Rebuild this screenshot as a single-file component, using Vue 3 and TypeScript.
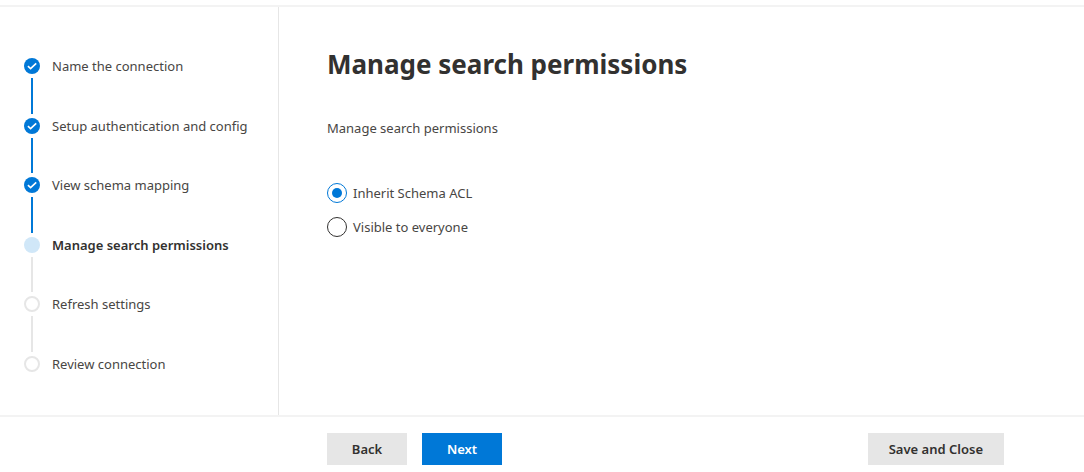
<script setup lang="ts">
import { ref } from 'vue'

type StepState = 'done' | 'current' | 'todo'

interface Step {
  label: string
  state: StepState
}

const steps: Step[] = [
  { label: 'Name the connection', state: 'done' },
  { label: 'Setup authentication and config', state: 'done' },
  { label: 'View schema mapping', state: 'done' },
  { label: 'Manage search permissions', state: 'current' },
  { label: 'Refresh settings', state: 'todo' },
  { label: 'Review connection', state: 'todo' },
]

const options = [
  { value: 'acl', label: 'Inherit Schema ACL' },
  { value: 'everyone', label: 'Visible to everyone' },
]

const visibility = ref('acl')
</script>

<template>
  <div class="wizard">
    <div class="body">
      <nav class="sidebar" aria-label="Setup steps">
        <ol class="steps">
          <li
            v-for="step in steps"
            :key="step.label"
            class="step"
            :class="step.state"
            :aria-current="step.state === 'current' ? 'step' : undefined"
          >
            <div class="track">
              <span class="marker">
                <svg v-if="step.state === 'done'" viewBox="0 0 16 16" aria-hidden="true">
                  <path d="M3.9 8.2 6.6 10.7 12.2 5.3" />
                </svg>
              </span>
              <span class="line"></span>
            </div>
            <span class="label">{{ step.label }}</span>
          </li>
        </ol>
      </nav>
      <main class="content">
        <h1>Manage search permissions</h1>
        <p id="description">Manage search permissions</p>
        <div class="options" role="radiogroup" aria-labelledby="description">
          <label v-for="option in options" :key="option.value" class="option">
            <input v-model="visibility" type="radio" name="visibility" :value="option.value" />
            <span>{{ option.label }}</span>
          </label>
        </div>
      </main>
    </div>
    <footer class="footer">
      <button type="button">Back</button>
      <button type="button" class="primary">Next</button>
      <button type="button" class="save">Save and Close</button>
    </footer>
  </div>
</template>

<style>
body {
  margin: 0;
  background: #fff;
}
</style>

<style scoped>
.wizard {
  box-sizing: border-box;
  display: flex;
  flex-direction: column;
  min-height: 100vh;
  padding-top: 5px;
  color: #484644;
  font-family: "Segoe UI", "Noto Sans", "Open Sans", sans-serif;
  font-size: 13px;
  line-height: 20px;
}

.body {
  display: flex;
  flex: 1;
  border-top: 2px solid #f3f3f3;
}

.sidebar {
  box-sizing: border-box;
  display: flex;
  flex: none;
  width: 279px;
  padding: 51px 16px 43px 24px;
  border-right: 1px solid #e6e6e6;
}

.steps {
  display: flex;
  flex: 1;
  flex-direction: column;
  margin: 0;
  padding: 0;
  list-style: none;
}

.step {
  display: flex;
  flex: 1;
  gap: 12px;
}

.step:last-child {
  flex: none;
}

.track {
  display: flex;
  flex-direction: column;
  align-items: center;
}

.marker {
  box-sizing: border-box;
  width: 16px;
  height: 16px;
  border: 2px solid #e6e6e6;
  border-radius: 50%;
}

.done .marker {
  border: 0;
  background: #0078d7;
}

.current .marker {
  border: 0;
  background: #d0e7f8;
}

.marker svg {
  display: block;
  fill: none;
  stroke: #fff;
  stroke-width: 1.6;
}

.line {
  flex: 1;
  width: 2px;
  min-height: 24px;
  margin: 4px 0;
  background: #e6e6e6;
}

.done .line {
  background: #0078d7;
}

.step:last-child .line {
  display: none;
}

.label {
  height: 16px;
  line-height: 16px;
}

.current .label {
  color: #323130;
  font-weight: 600;
}

.content {
  flex: 1;
  padding: 37px 48px 0;
}

h1 {
  margin: 0;
  color: #323130;
  font-size: 26px;
  font-weight: 700;
  line-height: 40px;
}

p {
  margin: 34px 0 0;
}

.options {
  display: flex;
  flex-direction: column;
  align-items: flex-start;
  gap: 14px;
  margin-top: 45px;
}

.option {
  display: flex;
  gap: 6px;
}

.option input {
  appearance: none;
  display: grid;
  place-content: center;
  box-sizing: border-box;
  width: 20px;
  height: 20px;
  margin: 0;
  border: 1px solid #323130;
  border-radius: 50%;
}

.option input:checked {
  border-color: #0078d7;
}

.option input:checked::before {
  content: "";
  width: 10px;
  height: 10px;
  border-radius: 50%;
  background: #0078d7;
}

.footer {
  display: flex;
  gap: 15px;
  padding: 16px 80px 7px 327px;
  border-top: 2px solid #f3f3f3;
}

button {
  min-width: 80px;
  height: 32px;
  padding: 0 21px;
  border: 0;
  background: #e6e6e6;
  color: #323130;
  font: inherit;
  font-weight: 600;
}

.primary {
  background: #0078d7;
  color: #fff;
}

.save {
  margin-left: auto;
}
</style>
